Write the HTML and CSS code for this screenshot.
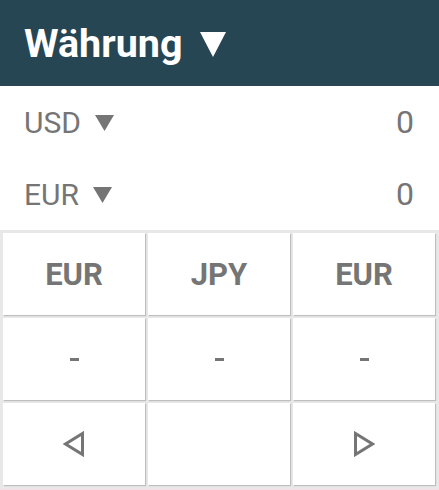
FILE: index.html
```html
<!DOCTYPE html>
<html lang="de">
<head>
<meta charset="utf-8">
<link rel="stylesheet" href="styles.css">
</head>
<body>
<div class="app">
  <header class="header">
    <span class="title">Währung</span>
    <svg class="title-caret" width="26" height="25" viewBox="0 0 26 25"><polygon points="0,0 26,0 13,25" fill="#fff"/></svg>
  </header>
  <div class="row">
    <div class="cur"><span>USD</span><svg class="caret" width="19" height="16" viewBox="0 0 19 16"><polygon points="0,0 19,0 9.5,16" fill="#757575"/></svg></div>
    <span class="val">0</span>
  </div>
  <div class="row">
    <div class="cur"><span>EUR</span><svg class="caret" width="19" height="16" viewBox="0 0 19 16"><polygon points="0,0 19,0 9.5,16" fill="#757575"/></svg></div>
    <span class="val">0</span>
  </div>
  <div class="pad">
    <div class="btn">EUR</div>
    <div class="btn">JPY</div>
    <div class="btn">EUR</div>
    <div class="btn"><span class="dash"></span></div>
    <div class="btn"><span class="dash"></span></div>
    <div class="btn"><span class="dash"></span></div>
    <div class="btn"><svg width="22" height="26" viewBox="0 0 22 26"><polygon points="19.5,2.5 19.5,23.5 2.5,13" fill="none" stroke="#757575" stroke-width="3" stroke-linejoin="miter"/></svg></div>
    <div class="btn"></div>
    <div class="btn"><svg width="22" height="26" viewBox="0 0 22 26"><polygon points="2.5,2.5 2.5,23.5 19.5,13" fill="none" stroke="#757575" stroke-width="3" stroke-linejoin="miter"/></svg></div>
  </div>
</div>
</body>
</html>
```

FILE: styles.css
```css
* { box-sizing: border-box; }
html, body { margin: 0; padding: 0; }
body {
  font-family: Roboto, "Noto Sans", sans-serif;
  background: #f6dde6;
  width: 439px;
  height: 490px;
  overflow: hidden;
}
.app {
  height: 489px;
  background: #fff;
  display: flex;
  flex-direction: column;
}
.header {
  height: 86px;
  background: #274654;
  color: #fff;
  display: flex;
  align-items: center;
  padding-left: 24px;
  gap: 18px;
}
.title {
  font-size: 39.5px;
  font-weight: 700;
}
.title-caret { margin-top: 2px; }
.row {
  height: 72px;
  display: flex;
  align-items: center;
  justify-content: space-between;
  padding: 0 25px 0 24px;
  color: #757575;
  font-size: 30px;
}
.cur {
  display: flex;
  align-items: center;
  gap: 14px;
}
.caret { margin-top: 2px; }
.val { font-size: 32px; }
.pad {
  flex: 1;
  background: #e8e8e8;
  padding: 3px 4px 4px 3px;
  display: grid;
  grid-template-columns: repeat(3, 1fr);
  grid-template-rows: repeat(3, 1fr);
  gap: 3px;
}
.btn {
  background: #fff;
  box-shadow: 1px 1px 1px rgba(0,0,0,0.18);
  display: flex;
  align-items: center;
  justify-content: center;
  color: #757575;
  font-weight: 700;
  font-size: 31px;
}
.dash {
  width: 9px;
  height: 3px;
  background: #757575;
  display: block;
}
```
